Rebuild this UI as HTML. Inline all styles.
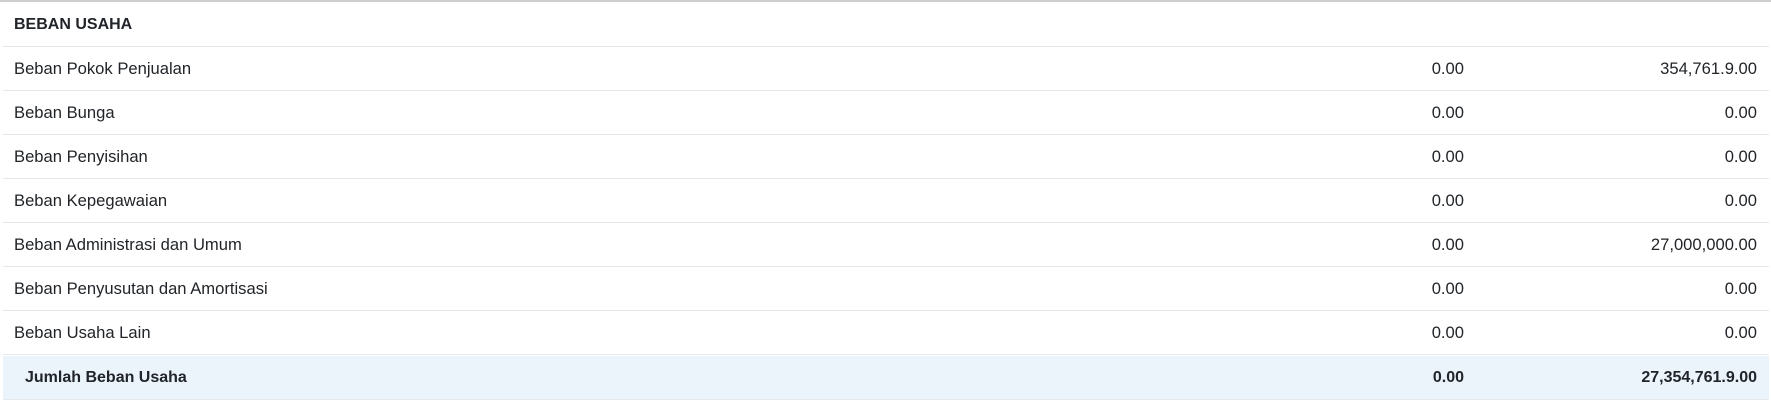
<!DOCTYPE html>
<html><head><style>
body{margin:0;width:1771px;height:402px;background:#fff;font-family:"Liberation Sans",sans-serif;font-size:16.6px;color:#212529;position:relative;overflow:hidden}
.top{position:absolute;left:0;top:0;width:1771px;height:2px;background:#cfcfcf}
.r{position:absolute;left:3px;width:1766px;height:43px;border-bottom:1px solid #e6e8ea;line-height:44px}
.l{position:absolute;left:11px}
.a{position:absolute;right:305px}
.b{position:absolute;right:12px}
.t{background:#ebf3fb;font-weight:bold;font-size:16px}
.t .l{left:22px}
</style></head><body>
<div class="top"></div>
<div class="r" style="top:3px"><span class="l" style="font-weight:bold;font-size:16px">BEBAN USAHA</span></div>
<div class="r" style="top:47px"><span class="l">Beban Pokok Penjualan</span><span class="a">0.00</span><span class="b">354,761.9.00</span></div>
<div class="r" style="top:91px"><span class="l">Beban Bunga</span><span class="a">0.00</span><span class="b">0.00</span></div>
<div class="r" style="top:135px"><span class="l">Beban Penyisihan</span><span class="a">0.00</span><span class="b">0.00</span></div>
<div class="r" style="top:179px"><span class="l">Beban Kepegawaian</span><span class="a">0.00</span><span class="b">0.00</span></div>
<div class="r" style="top:223px"><span class="l">Beban Administrasi dan Umum</span><span class="a">0.00</span><span class="b">27,000,000.00</span></div>
<div class="r" style="top:267px"><span class="l">Beban Penyusutan dan Amortisasi</span><span class="a">0.00</span><span class="b">0.00</span></div>
<div class="r" style="top:311px"><span class="l">Beban Usaha Lain</span><span class="a">0.00</span><span class="b">0.00</span></div>
<div class="r t" style="top:356px"><span class="l">Jumlah Beban Usaha</span><span class="a">0.00</span><span class="b">27,354,761.9.00</span></div>
</body></html>
